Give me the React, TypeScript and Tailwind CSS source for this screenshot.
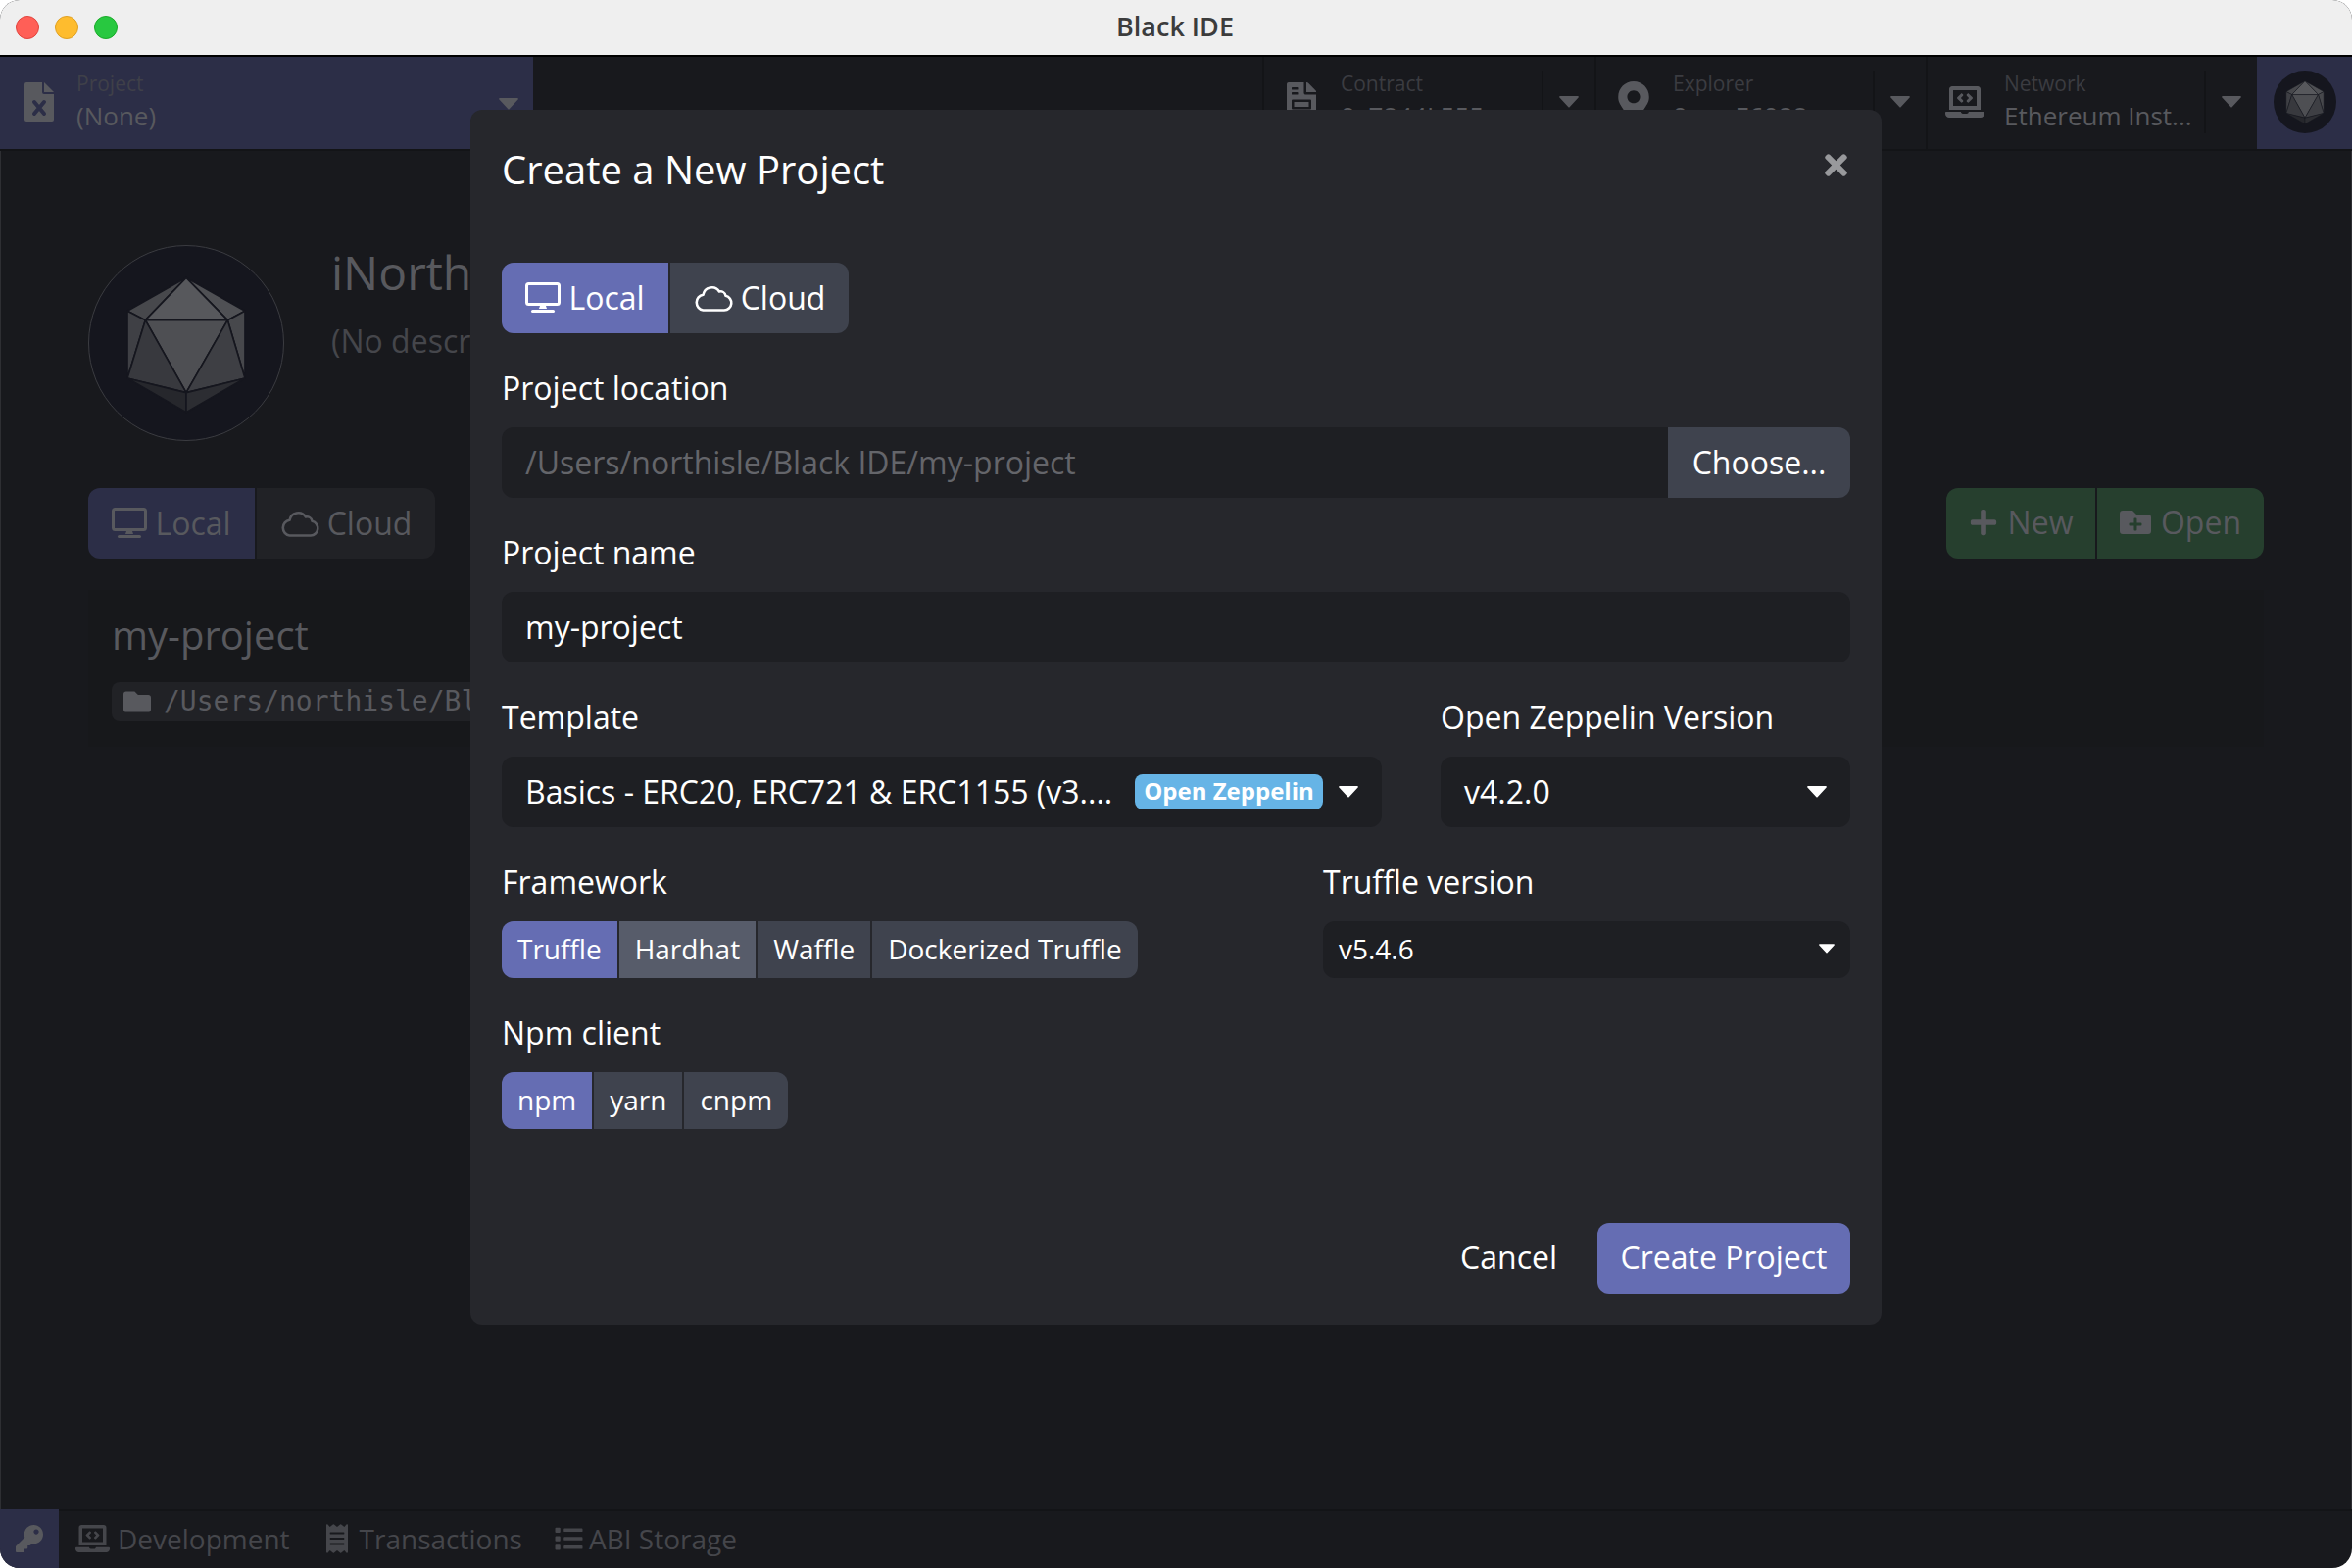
import React from 'react';
import { FaFileInvoice, FaMapMarkerAlt, FaLaptopCode, FaKey, FaReceipt, FaList, FaPlus, FaFolderPlus, FaFolder, FaTimes } from 'react-icons/fa';

const Caret = ({ className = '' }: { className?: string }) => (
  <svg viewBox="0 0 20 12" className={className} fill="currentColor">
    <path d="M1 0h18c.8 0 1.2 1 .6 1.6l-9 9.6c-.3.4-.9.4-1.2 0L.4 1.6C-.2 1 .2 0 1 0z" />
  </svg>
);

const Desktop = ({ className = '' }: { className?: string }) => (
  <svg viewBox="0 0 36 32" className={className} fill="none" stroke="currentColor">
    <rect x="1.5" y="1.5" width="33" height="21" rx="2" strokeWidth="3" />
    <path d="M15 24h6l1 3h-8z" fill="currentColor" stroke="none" />
    <rect x="6" y="28" width="24" height="3" rx="1.5" fill="currentColor" stroke="none" />
  </svg>
);

const CloudIcon = ({ className = '' }: { className?: string }) => (
  <svg viewBox="0 0 40 28" className={className} fill="none" stroke="currentColor" strokeWidth="2.6">
    <path d="M9.5 26.5H31a7.5 7.5 0 0 0 1.5-14.8 5.5 5.5 0 0 0-6.5-4.2A9 9 0 0 0 9.5 10.7 8 8 0 0 0 9.5 26.5z" strokeLinejoin="round" />
  </svg>
);

const FileTimes = ({ className = '' }: { className?: string }) => (
  <svg viewBox="0 0 30 40" className={className}>
    <path d="M0 2a2 2 0 0 1 2-2h16v10a2 2 0 0 0 2 2h10v26a2 2 0 0 1-2 2H2a2 2 0 0 1-2-2z" fill="#58595e" />
    <path d="M20 0l10 10H20z" fill="#58595e" />
    <path d="M10 20l10 12M20 20L10 32" stroke="#2c2e47" strokeWidth="4" strokeLinecap="round" />
  </svg>
);

const Logo = ({ className = '' }: { className?: string }) => (
  <svg viewBox="0 0 600 600" className={className}>
    <g stroke="#15161e" strokeWidth="5" strokeLinejoin="round">
      <path d="M300 100L120 202 175 230z" fill="#47484c" />
      <path d="M300 100L480 202 427 230z" fill="#4f5054" />
      <path d="M300 100L175 230H427z" fill="#57585c" />
      <path d="M175 230H427L300 452z" fill="#4e4f53" />
      <path d="M120 202L175 230 120 408z" fill="#3f4045" />
      <path d="M480 202L427 230 480 408z" fill="#47484c" />
      <path d="M175 230L120 408 300 452z" fill="#38393e" />
      <path d="M427 230L480 408 300 452z" fill="#3e3f44" />
      <path d="M120 408L300 452V512z" fill="#26272c" />
      <path d="M480 408L300 452V512z" fill="#2c2d32" />
    </g>
  </svg>
);

const HeaderSelect = ({ icon, label, value, width }: { icon: React.ReactNode; label: string; value: string; width: string }) => (
  <div className={`${width} flex items-center border-l-2 border-[#131417] pl-[22px] pb-[2px] h-full`}>
    <div className="w-[32px] flex justify-center shrink-0">{icon}</div>
    <div className="ml-[24px] flex-1 min-w-0 whitespace-nowrap">
      <div className="text-[21px] leading-[28px] text-[#3b3c41]">{label}</div>
      <div className="text-[26px] leading-[38px] text-[#58595e]">{value}</div>
    </div>
    <div className="w-[54px] h-[64px] border-l-2 border-[#131417] flex items-center justify-center shrink-0">
      <Caret className="w-[20px] h-[12px] text-[#58595e]" />
    </div>
  </div>
);

const Label = ({ children }: { children: React.ReactNode }) => (
  <div className="text-[32px] leading-[37px] text-white mb-[19px] h-[40px]">{children}</div>
);

const Group = ({ items, active, hover }: { items: string[]; active: string; hover?: string }) => (
  <div className="flex h-[58px] gap-[2px] w-fit rounded-[12px] overflow-hidden">
    {items.map(it => (
      <div key={it} className={`px-[16px] pb-[2px] flex items-center text-[28px] text-white ${it === active ? 'bg-[#656db3]' : it === hover ? 'bg-[#575c6a]' : 'bg-[#3f434e]'}`}>
        {it}
      </div>
    ))}
  </div>
);

const App: React.FC = () => {
  return (
    <div className="relative w-[2400px] h-[1600px] overflow-hidden flex flex-col bg-[#18191d] rounded-[20px] font-['Open_Sans',sans-serif]">
      <div className="h-[56px] bg-[#efefef] flex items-center relative shrink-0 border-b-2 border-black box-content">
        <div className="flex gap-[16px] ml-[16px]">
          <div className="w-[24px] h-[24px] rounded-full bg-[#ff5f57] border border-[#e0443e]" />
          <div className="w-[24px] h-[24px] rounded-full bg-[#febc2e] border border-[#dfa023]" />
          <div className="w-[24px] h-[24px] rounded-full bg-[#28c840] border border-[#1aab29]" />
        </div>
        <div className="flex-1 text-center text-[27px] font-semibold text-[#3c3c3c] -ml-[122px] pb-[2px]">Black IDE</div>
      </div>

      {/* header */}
      <div className="h-[96px] flex shrink-0 border-b-2 border-[#131417]">
        <div className="w-[544px] bg-[#2c2e47] flex items-center pl-[25px] pb-[2px] relative">
          <FileTimes className="w-[30px] h-[40px]" />
          <div className="ml-[23px]">
            <div className="text-[21px] leading-[28px] text-[#3f4049]">Project</div>
            <div className="text-[26px] leading-[38px] text-[#58595e]">(None)</div>
          </div>
          <Caret className="absolute left-[509px] top-[42px] w-[20px] h-[12px] text-[#58595e]" />
        </div>
        <div className="flex-1" />
        <HeaderSelect width="w-[339px]" label="Contract" value="0x7844L555" icon={<FaFileInvoice className="w-[30px] h-[40px] shrink-0 text-[#58595e]" />} />
        <HeaderSelect width="w-[338px]" label="Explorer" value="0xa...E6088" icon={<FaMapMarkerAlt className="w-[32px] h-[42px] shrink-0 text-[#58595e]" />} />
        <HeaderSelect width="w-[338px]" label="Network" value="Ethereum Inst..." icon={<FaLaptopCode className="w-[40px] h-[40px] shrink-0 text-[#58595e]" />} />
        <div className="w-[97px] bg-[#2c2e47] flex items-center justify-center pb-[2px]">
          <div className="w-[64px] h-[64px] rounded-full bg-[#15161e] flex items-center justify-center">
            <Logo className="w-[64px] h-[64px]" />
          </div>
        </div>
      </div>

      {/* page behind the dialog */}
      <div className="flex-1 px-[90px] pt-[96px] shadow-[inset_1px_0_0_#2e2f33,inset_-1px_0_0_#2e2f33]">
        <div className="flex items-start">
          <div className="w-[200px] h-[200px] rounded-full bg-[#15161e] border border-[#3b3c41] shrink-0">
            <Logo className="w-[200px] h-[200px] -m-px" />
          </div>
          <div className="ml-[48px] whitespace-nowrap">
            <div className="text-[48px] leading-[64px] text-[#58595e] mt-[-4px]">iNorthisle</div>
            <div className="text-[32px] leading-[44px] text-[#45464b] mt-[16px]">(No description)</div>
          </div>
        </div>
        <div className="flex justify-between mt-[48px]">
          <div className="flex h-[72px] gap-[2px] rounded-[12px] overflow-hidden text-[32px] text-[#58595e]">
            <div className="w-[170px] bg-[#2c2e47] flex items-center justify-center gap-[8px]"><Desktop className="w-[36px] h-[32px]" />Local</div>
            <div className="w-[182px] bg-[#212226] flex items-center justify-center gap-[8px]"><CloudIcon className="w-[40px] h-[28px]" />Cloud</div>
          </div>
          <div className="flex h-[72px] gap-[2px] rounded-[12px] overflow-hidden text-[32px] text-[#58595e]">
            <div className="w-[152px] bg-[#263f2e] flex items-center justify-center gap-[10px] pb-[2px]"><FaPlus className="w-[30px] h-[30px]" />New</div>
            <div className="w-[170px] bg-[#263f2e] flex items-center justify-center gap-[10px] pb-[2px]"><FaFolderPlus className="w-[32px] h-[32px]" />Open</div>
          </div>
        </div>
        <div className="mt-[32px] h-[160px] bg-[#17181b] px-[24px] pt-[19px]">
          <div className="text-[40px] leading-[54px] text-[#58595e]">my-project</div>
          <div className="mt-[21px] h-[40px] w-[480px] rounded-[8px] bg-[#212226] flex items-center pl-[12px] text-[28px] text-[#58595e] font-['DejaVu_Sans_Mono',monospace] whitespace-nowrap">
            <FaFolder className="w-[28px] h-[28px] mr-[13px] shrink-0" />/Users/northisle/Bl
          </div>
        </div>
      </div>

      {/* status bar */}
      <div className="h-[60px] border-t-2 border-[#131417] pb-[2px] flex items-center shrink-0 text-[28px] text-[#45464b]">
        <div className="w-[60px] h-[60px] bg-[#2c2e47] flex items-center justify-center">
          <FaKey className="w-[28px] h-[28px] text-[#58595e]" />
        </div>
        <div className="flex items-center ml-[17px]"><FaLaptopCode className="w-[35px] h-[32px] mr-[8px]" />Development</div>
        <div className="flex items-center ml-[37px]"><FaReceipt className="w-[22px] h-[32px] mr-[12px]" />Transactions</div>
        <div className="flex items-center ml-[33px]"><FaList className="w-[29px] h-[28px] mr-[6px]" />ABI Storage</div>
      </div>

      {/* dialog */}
      <div className="absolute left-[480px] top-[112px] w-[1440px] h-[1240px] bg-[#26272c] rounded-[12px] px-[32px] flex flex-col">
        <div className="flex justify-between items-start pt-[34px] h-[156px]">
          <div className="text-[40px] leading-[54px] text-white">Create a New Project</div>
          <FaTimes className="w-[23px] h-[33px] text-[#98999c] mt-[6px] mr-[3px]" />
        </div>

        <div className="flex h-[72px] gap-[2px] w-fit rounded-[12px] overflow-hidden text-[32px] text-white">
          <div className="w-[170px] bg-[#656db3] flex items-center justify-center gap-[8px]"><Desktop className="w-[36px] h-[32px]" />Local</div>
          <div className="w-[182px] bg-[#3f434e] flex items-center justify-center gap-[8px]"><CloudIcon className="w-[40px] h-[28px]" />Cloud</div>
        </div>

        <div className="mt-[37px]">
          <Label>Project location</Label>
          <div className="flex h-[72px] rounded-[12px] overflow-hidden text-[32px]">
            <div className="flex-1 bg-[#1e1f23] px-[24px] flex items-center text-[#64656a]">/Users/northisle/Black IDE/my-project</div>
            <div className="w-[186px] bg-[#3f434e] flex items-center justify-center text-white">Choose...</div>
          </div>
        </div>

        <div className="mt-[37px]">
          <Label>Project name</Label>
          <div className="h-[72px] rounded-[12px] bg-[#1e1f23] px-[24px] flex items-center text-[32px] text-white">my-project</div>
        </div>

        <div className="mt-[37px] flex gap-[60px]">
          <div className="w-[898px]">
            <Label>Template</Label>
            <div className="h-[72px] rounded-[12px] bg-[#1e1f23] pl-[24px] flex items-center text-[32px] text-white whitespace-nowrap">
              <span className="w-[622px] overflow-hidden">Basics - ERC20, ERC721 &amp; ERC1155 (v3....</span>
              <span className="h-[36px] w-[192px] rounded-[8px] bg-[#66b4e6] flex items-center justify-center text-[24px] font-bold pb-[2px]">Open Zeppelin</span>
              <Caret className="w-[20px] h-[12px] ml-[16px]" />
            </div>
          </div>
          <div className="flex-1">
            <Label>Open Zeppelin Version</Label>
            <div className="h-[72px] rounded-[12px] bg-[#1e1f23] px-[24px] flex items-center justify-between text-[32px] text-white">
              v4.2.0
              <Caret className="w-[20px] h-[12px]" />
            </div>
          </div>
        </div>

        <div className="mt-[37px] flex justify-between">
          <div>
            <Label>Framework</Label>
            <Group items={['Truffle', 'Hardhat', 'Waffle', 'Dockerized Truffle']} active="Truffle" hover="Hardhat" />
          </div>
          <div className="w-[538px]">
            <Label>Truffle version</Label>
            <div className="h-[58px] rounded-[12px] bg-[#1e1f23] px-[16px] pb-[2px] flex items-center justify-between text-[28px] text-white">
              v5.4.6
              <Caret className="w-[16px] h-[10px]" />
            </div>
          </div>
        </div>

        <div className="mt-[37px]">
          <Label>Npm client</Label>
          <Group items={['npm', 'yarn', 'cnpm']} active="npm" />
        </div>

        <div className="mt-auto mb-[32px] flex justify-end items-center text-[32px] text-white">
          <div className="mr-[41px] pb-[2px]">Cancel</div>
          <div className="w-[258px] h-[72px] pb-[2px] bg-[#656db3] rounded-[12px] flex items-center justify-center">Create Project</div>
        </div>
      </div>
    </div>
  );
};

export default App;
